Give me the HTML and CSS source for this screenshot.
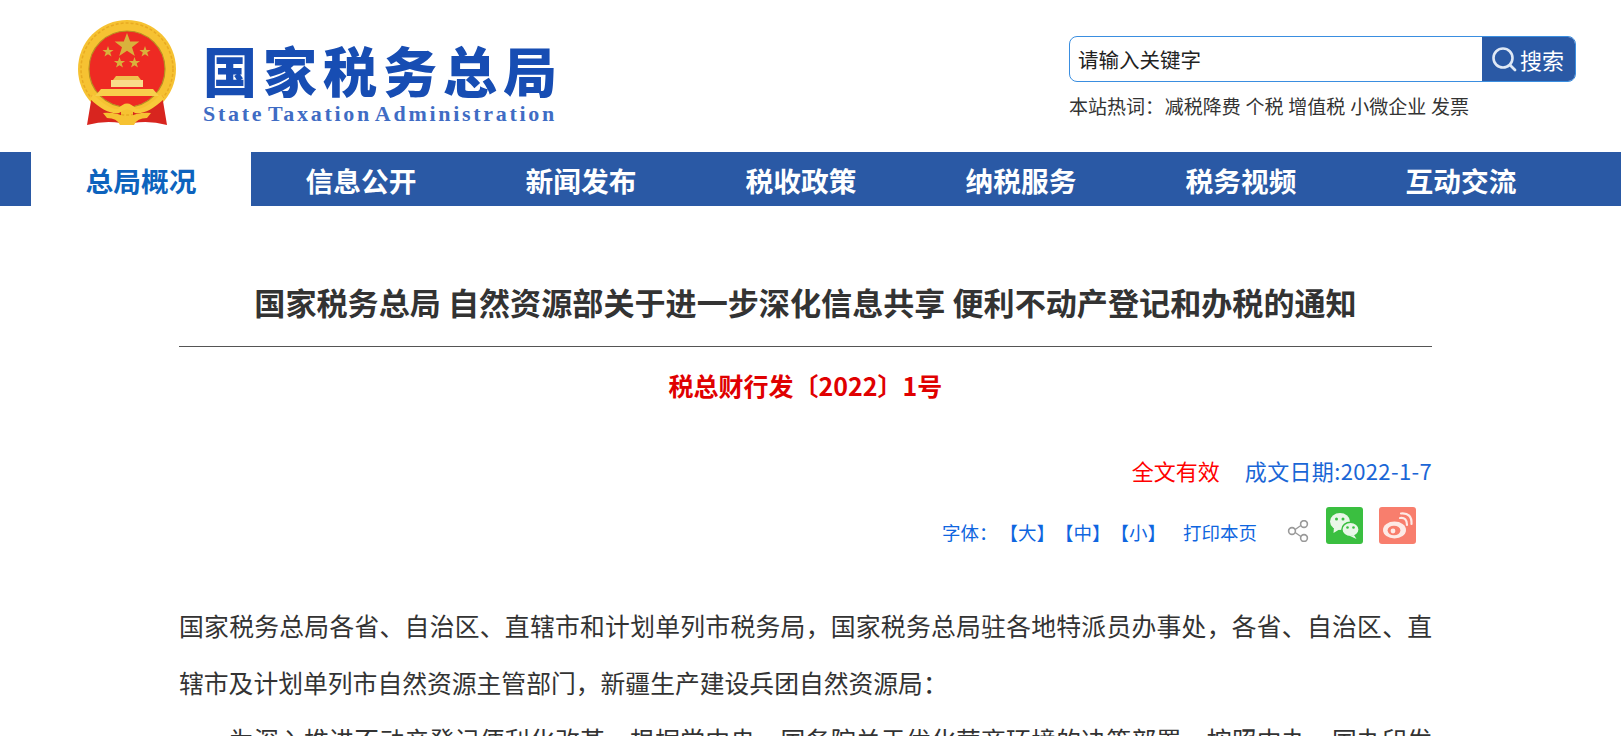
FILE: index.html
```html
<!DOCTYPE html>
<html lang="zh-CN">
<head>
    <meta charset="UTF-8">
    <title>国家税务总局 自然资源部关于进一步深化信息共享 便利不动产登记和办税的通知</title>
    <link rel="stylesheet" href="styles.css">
</head>
<body>
    <header class="top">
        <div class="logo">
            <svg class="emblem" viewBox="0 0 100 106" width="100" height="106">
                <circle cx="50" cy="49" r="49" fill="#f6c232"/>
                <circle cx="50" cy="49" r="46" fill="none" stroke="#e8aa22" stroke-width="1.5" stroke-dasharray="3 2"/>
                <circle cx="50" cy="49" r="38" fill="#ee2a23" stroke="#b88f22" stroke-width="1.2"/>
                <polygon points="50,13 53.2,21.5 62.4,21.5 55,27.2 57.8,36 50,30.7 42.2,36 45,27.2 37.6,21.5 46.8,21.5" fill="#d9b13c"/>
                <polygon points="31,26 32.4,30 36.6,30 33.2,32.6 34.5,36.6 31,34.2 27.5,36.6 28.8,32.6 25.4,30 29.6,30" fill="#d9b13c"/>
                <polygon points="68,26 69.4,30 73.6,30 70.2,32.6 71.5,36.6 68,34.2 64.5,36.6 65.8,32.6 62.4,30 66.6,30" fill="#d9b13c"/>
                <polygon points="42.5,37 43.9,41 48.1,41 44.7,43.6 46,47.6 42.5,45.2 39,47.6 40.3,43.6 36.9,41 41.1,41" fill="#d9b13c"/>
                <polygon points="57.5,37 58.9,41 63.1,41 59.7,43.6 61,47.6 57.5,45.2 54,47.6 55.3,43.6 51.9,41 56.1,41" fill="#d9b13c"/>
                <path d="M39 56 H61 L64 60 H36 Z" fill="#f0c04e"/>
                <rect x="34" y="60" width="32" height="7" fill="#f9dc8a"/>
                <path d="M24 69 H76 L82 76 H18 Z" fill="#f8cf4c"/>
                <path d="M15 75 Q30 91 44 92 L44 103 Q28 100 10 105 Z" fill="#d8251f"/>
                <path d="M85 75 Q70 91 56 92 L56 103 Q72 100 90 105 Z" fill="#d8251f"/>
                <path d="M16 74 Q32 90 41 89 Q50 78 59 89 Q68 90 84 74 L87 79 Q70 95 58 93 Q50 86 42 93 Q30 95 13 79 Z" fill="#f8c93a"/>
                <path d="M26 93 Q40 92 50 98 Q60 92 74 93 L70 98 Q60 98 57 105 H43 Q40 98 30 98 Z" fill="#f6c232"/>
            </svg>
            <div class="logo-text">
                <div class="logo-cn">国家税务总局</div>
                <div class="logo-en">State Taxation Administration</div>
            </div>
        </div>
        <div class="search-area">
            <div class="search-box">
                <div class="search-input">请输入关键字</div>
                <div class="search-btn">
                    <svg viewBox="0 0 26 26" width="26" height="26">
                        <circle cx="12" cy="12" r="9.5" fill="none" stroke="#dfe8f5" stroke-width="2.6"/>
                        <path d="M19 19 L24 24" stroke="#dfe8f5" stroke-width="2.8" stroke-linecap="round"/>
                    </svg>
                    <span>搜索</span>
                </div>
            </div>
            <div class="hot-words">
                <span class="hot-label">本站热词：</span>
                <a>减税降费</a> <a>个税</a> <a>增值税</a> <a>小微企业</a> <a>发票</a>
            </div>
        </div>
    </header>

    <nav class="nav">
        <a class="nav-item active">总局概况</a>
        <a class="nav-item">信息公开</a>
        <a class="nav-item">新闻发布</a>
        <a class="nav-item">税收政策</a>
        <a class="nav-item">纳税服务</a>
        <a class="nav-item">税务视频</a>
        <a class="nav-item">互动交流</a>
    </nav>

    <main class="article">
        <h1 class="title">国家税务总局 自然资源部关于进一步深化信息共享 便利不动产登记和办税的通知</h1>
        <div class="doc-no">税总财行发〔2022〕1号</div>
        <div class="status">
            <span class="valid">全文有效</span>
            <span class="date">成文日期:2022-1-7</span>
        </div>
        <div class="tools">
            <span class="tool-label">字体：</span>
            <a class="size">【大】</a><a class="size">【中】</a><a class="size">【小】</a>
            <a class="print">打印本页</a>
            <svg class="share" viewBox="0 0 22 22" width="22" height="22">
                <path d="M6 11 L16 4 M6 11 L16 18" stroke="#999" stroke-width="1.4"/>
                <circle cx="5" cy="11" r="3.4" fill="#fff" stroke="#999" stroke-width="1.6"/>
                <circle cx="17" cy="4" r="3.4" fill="#fff" stroke="#999" stroke-width="1.6"/>
                <circle cx="17" cy="18" r="3.4" fill="#fff" stroke="#999" stroke-width="1.6"/>
            </svg>
            <svg class="social" viewBox="0 0 37 37" width="37" height="37">
                <rect width="37" height="37" rx="3" fill="#3abf40"/>
                <ellipse cx="14" cy="14.5" rx="10" ry="8.4" fill="#e9f7e8"/>
                <path d="M8 20 L7.5 26 L14 22 Z" fill="#e9f7e8"/>
                <ellipse cx="24.5" cy="22.5" rx="8.6" ry="7.2" fill="#e9f7e8" stroke="#3abf40" stroke-width="1.4"/>
                <path d="M28 28 L30.5 32 L24 29 Z" fill="#e9f7e8"/>
                <circle cx="10.5" cy="12" r="1.5" fill="#3abf40"/>
                <circle cx="17" cy="12" r="1.5" fill="#3abf40"/>
                <circle cx="21.5" cy="20.5" r="1.3" fill="#3abf40"/>
                <circle cx="27.5" cy="20.5" r="1.3" fill="#3abf40"/>
            </svg>
            <svg class="social" viewBox="0 0 37 37" width="37" height="37">
                <rect width="37" height="37" rx="3" fill="#f87e6d"/>
                <ellipse cx="15.5" cy="23" rx="11.5" ry="8.4" fill="#fdeae6"/>
                <ellipse cx="15" cy="23.5" rx="6.4" ry="4.8" fill="#f87e6d"/>
                <circle cx="14" cy="24" r="2.4" fill="#fdeae6"/>
                <path d="M21 11 Q28 10 28 18" fill="none" stroke="#fdeae6" stroke-width="2.2" stroke-linecap="round"/>
                <path d="M22 6.5 Q33 5.5 32.5 17" fill="none" stroke="#fdeae6" stroke-width="2.2" stroke-linecap="round"/>
            </svg>
        </div>
        <p class="para first">国家税务总局各省、自治区、直辖市和计划单列市税务局，国家税务总局驻各地特派员办事处，各省、自治区、直辖市及计划单列市自然资源主管部门，新疆生产建设兵团自然资源局：</p>
        <p class="para indent">为深入推进不动产登记便利化改革，根据党中央、国务院关于优化营商环境的决策部署，按照中办、国办印发</p>
    </main>
</body>
</html>
```

FILE: styles.css
```css
html, body {
    margin: 0;
    padding: 0;
    height: 736px;
    overflow: hidden;
    background-color: #fff;
    font-family: "Noto Sans CJK SC", "Noto Sans", sans-serif;
    color: #333;
}

a {
    text-decoration: none;
}

/* header */
.top {
    height: 152px;
    display: flex;
    justify-content: space-between;
    padding: 20px 45px 0 77px;
    box-sizing: border-box;
}

.logo {
    display: flex;
    align-items: flex-start;
    gap: 26px;
}

.logo-text {
    padding-top: 18px;
}

.logo-cn {
    font-size: 54px;
    line-height: 64px;
    font-weight: 900;
    letter-spacing: 6px;
    color: #174db3;
    white-space: nowrap;
}

.logo-en {
    font-family: "Liberation Serif", serif;
    font-size: 22px;
    line-height: 24px;
    font-weight: bold;
    letter-spacing: 2.7px;
    word-spacing: -4px;
    color: #3f6cc4;
    white-space: nowrap;
}

.search-area {
    width: 507px;
    padding-top: 16px;
}

.search-box {
    display: flex;
    height: 44px;
    border: 1px solid #3a8ee0;
    border-radius: 8px;
    overflow: hidden;
}

.search-input {
    flex: 1;
    padding-left: 8px;
    font-size: 20.5px;
    line-height: 44px;
    color: #222;
}

.search-btn {
    width: 93px;
    box-sizing: border-box;
    padding-right: 2px;
    background-color: #2a59a5;
    color: #fff;
    display: flex;
    align-items: center;
    justify-content: center;
    gap: 3px;
    font-size: 22px;
}

.hot-words {
    margin-top: 10px;
    font-size: 19px;
    line-height: 28px;
    word-spacing: 0.5px;
    color: #333;
    white-space: nowrap;
}

.hot-label {
    margin-right: -4px;
}

/* nav */
.nav {
    height: 54px;
    padding-left: 31px;
    background-color: #2a59a5;
    display: flex;
}

.nav-item {
    width: 220px;
    padding-top: 2px;
    text-align: center;
    font-size: 27.7px;
    line-height: 52px;
    font-weight: bold;
    color: #fff;
}

.nav-item.active {
    background-color: #fff;
    color: #0d63bd;
}

/* article */
.article {
    width: 1253px;
    margin-left: 179px;
    padding-top: 70px;
}

.title {
    margin: 0;
    padding-bottom: 19px;
    border-bottom: 1px solid #555;
    font-size: 31.1px;
    line-height: 51px;
    font-weight: bold;
    text-align: center;
    color: #333;
    white-space: nowrap;
}

.doc-no {
    margin-top: 17px;
    font-size: 25px;
    line-height: 42px;
    font-weight: bold;
    text-align: center;
    color: #e00000;
}

.status {
    margin-top: 47px;
    font-size: 22px;
    line-height: 34px;
    text-align: right;
}

.valid {
    color: #f00;
    margin-right: 20px;
}

.date {
    color: #1a66d6;
    letter-spacing: 0.35px;
}

.tools {
    margin-top: 19px;
    height: 40px;
    display: flex;
    justify-content: flex-end;
    align-items: flex-end;
    padding-right: 16px;
    font-size: 18.5px;
    line-height: 28px;
    color: #0f66e0;
}

.tools a {
    color: #0f66e0;
}

.tool-label {
    margin-right: 2px;
}

.print {
    margin-left: 17px;
}

.share {
    margin: 0 0 4px 30px;
}

.social {
    margin: 0 0 2px 17px;
}

.social + .social {
    margin-left: 16px;
}

.para {
    margin: 0;
    font-size: 24.8px;
    line-height: 57px;
    color: #333;
    text-align: justify;
}

.first {
    margin-top: 51px;
}

.indent {
    text-indent: 50px;
    text-align-last: justify;
}
```
